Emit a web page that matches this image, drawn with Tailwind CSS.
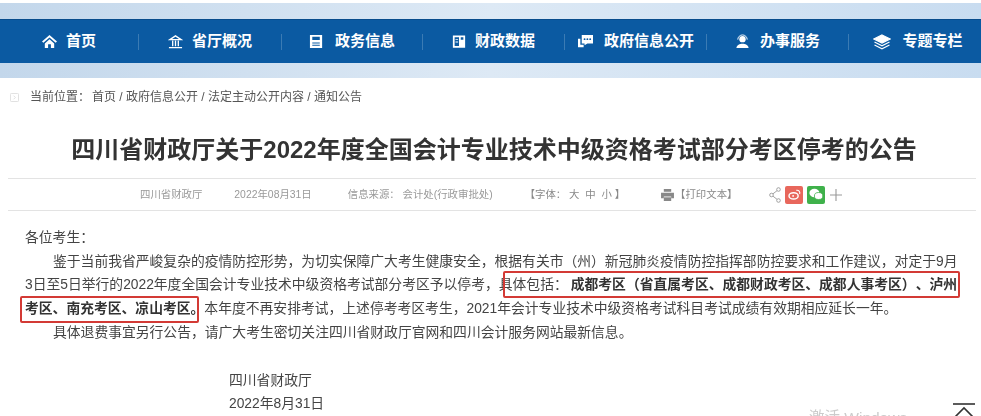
<!DOCTYPE html>
<html lang="zh-CN">
<head>
    <meta charset="UTF-8">
    <title>四川省财政厅关于2022年度全国会计专业技术中级资格考试部分考区停考的公告</title>
    <script src="https://cdn.jsdelivr.net/npm/@tailwindcss/browser@4"></script>
</head>
<body class="bg-white h-[416px] w-[981px] overflow-hidden relative font-['Liberation_Sans','Noto_Sans_CJK_SC',sans-serif] text-[#444] blur-[0.35px] [text-spacing-trim:space-all]">
    <!-- 顶部导航 -->
    <div class="mt-[3px] h-[75px] py-[16px] bg-gradient-to-r from-[#c3d7eb] via-[#dde9f5] to-[#c8dcf0]">
        <nav class="h-[44px] bg-[#0b5aa2] border-t border-[#084c8c] flex items-center text-white text-[15px] font-bold">
            <a class="w-[138px] flex items-center justify-center gap-[9px]">
                <svg class="w-[15px] h-[15px]" viewBox="0 0 16 16" fill="#fff"><path d="M8 1 L16 8 L14.5 9.2 L8 3.6 L1.5 9.2 L0 8 Z"/><path d="M8 5.5 L13 10 V15 H9.5 V11 H6.5 V15 H3 V10 Z"/></svg>
                <span>首页</span>
            </a>
            <span class="w-px h-[16px] bg-white/20"></span>
            <a class="w-[142px] flex items-center justify-center gap-[9px]">
                <svg class="w-[15px] h-[15px]" viewBox="0 0 16 16" fill="none" stroke="#fff" stroke-width="1.4"><path d="M2 6 L8 2 L14 6 Z"/><path d="M5 7 V13 M8 7 V13 M11 7 V13 M1 14.5 H15"/></svg>
                <span>省厅概况</span>
            </a>
            <span class="w-px h-[16px] bg-white/20"></span>
            <a class="w-[140px] flex items-center justify-center gap-[11px]">
                <svg class="w-[15px] h-[15px]" viewBox="0 0 16 16" fill="#fff"><path fill-rule="evenodd" d="M1 1 H14 V15 H1 Z M3.5 3 V6.5 H11.5 V3 Z M3.5 9 V10 H11.5 V9 Z M3.5 11.5 V12.5 H11.5 V11.5 Z"/></svg>
                <span>政务信息</span>
            </a>
            <span class="w-px h-[16px] bg-white/20"></span>
            <a class="w-[141px] flex items-center justify-center gap-[9px]">
                <svg class="w-[14px] h-[15px]" viewBox="0 0 16 16" fill="#fff"><path fill-rule="evenodd" d="M1 1 H15 V15 H1 Z M3 3 V13 H8 V3 Z M10 3 V6 H13 V3 Z"/><path d="M4 5 H7 V6 H4 Z M4 8 H7 V9 H4 Z"/></svg>
                <span>财政数据</span>
            </a>
            <span class="w-px h-[16px] bg-white/20"></span>
            <a class="w-[141px] flex items-center justify-center gap-[10px]">
                <svg class="w-[17px] h-[15px]" viewBox="0 0 18 16" fill="#fff"><path d="M5 1 H17 V10 H11 L8 12 V10 H5 Z"/><path d="M1 5 H3.5 V11.5 H7 V14 H1 Z"/><circle cx="8" cy="5.5" r="1" fill="#0b5aa2"/><circle cx="11" cy="5.5" r="1" fill="#0b5aa2"/><circle cx="14" cy="5.5" r="1" fill="#0b5aa2"/></svg>
                <span>政府信息公开</span>
            </a>
            <span class="w-px h-[16px] bg-white/20"></span>
            <a class="w-[141px] flex items-center justify-center gap-[10px]">
                <svg class="w-[15px] h-[15px]" viewBox="0 0 16 16" fill="#fff"><circle cx="8" cy="5.5" r="3.4"/><path d="M3 6 A5 5 0 0 1 13 6" fill="none" stroke="#fff" stroke-width="1"/><path d="M1.5 15 C2 11.5 5 10.5 8 10.5 C11 10.5 14 11.5 14.5 15 Z"/></svg>
                <span>办事服务</span>
            </a>
            <span class="w-px h-[16px] bg-white/20"></span>
            <a class="flex-1 flex items-center justify-center gap-[11px] pl-[6px]">
                <svg class="w-[18px] h-[16px]" viewBox="0 0 18 16" fill="none" stroke="#fff" stroke-width="1.2"><path d="M9 1 L17 5 L9 9 L1 5 Z" fill="#fff"/><path d="M1.5 8 L9 11.8 L16.5 8"/><path d="M1.5 11 L9 14.8 L16.5 11"/></svg>
                <span>专题专栏</span>
            </a>
        </nav>
    </div>

    <!-- 当前位置 -->
    <div class="mt-[11px] h-[16px] pl-[10px] flex items-center text-[12px] text-[#555]">
        <svg class="w-[9px] h-[9px] mr-[11px]" viewBox="0 0 10 10" fill="none" stroke="#ddd" stroke-width="1"><rect x="0.5" y="0.5" width="9" height="9" rx="1"/><path d="M4 3 L6 5 L4 7"/></svg>
        <span class="mr-[2px]">当前位置：</span>
        <span>首页 / 政府信息公开 / 法定主动公开内容 / 通知公告</span>
    </div>

    <!-- 标题 -->
    <h1 class="mt-[27px] pl-[7px] text-center text-[24px] leading-[36px] font-bold text-[#333] whitespace-nowrap">四川省财政厅关于2022年度全国会计专业技术中级资格考试部分考区停考的公告</h1>

    <!-- 信息条 -->
    <div class="mt-[10px] ml-[8px] mr-[5px] h-[33px] border-y border-[#e3e3e3] flex items-center text-[10.4px] text-[#999] relative whitespace-nowrap">
        <span class="ml-[132px]">四川省财政厅</span>
        <span class="ml-[32px]">2022年08月31日</span>
        <span class="ml-[36px]">信息来源： 会计处(行政审批处)</span>
        <span class="ml-[32px] text-[#888]">【字体： 大&nbsp; 中&nbsp; 小 】</span>
        <svg class="ml-[36px] w-[13px] h-[12px]" viewBox="0 0 14 13" fill="#888"><path d="M3 0 H11 V3 H3 Z"/><path d="M0 4 H14 V10 H11 V8 H3 V10 H0 Z"/><path d="M3 9 H11 V13 H3 Z"/></svg>
        <span class="ml-[1px] text-[#888]">【打印文本】</span>
        <svg class="ml-[32px] w-[12px] h-[16px]" viewBox="0 0 12 16" fill="none" stroke="#999" stroke-width="0.9"><circle cx="9.5" cy="2.5" r="1.8"/><circle cx="2.5" cy="8" r="1.8"/><circle cx="9.5" cy="13.5" r="1.8"/><path d="M8 3.7 L4 6.8 M4 9.2 L8 12.3"/></svg>
        <span class="ml-[4px] w-[18px] h-[18px] rounded-[2px] bg-[#e8675c] flex items-center justify-center">
            <svg class="w-[13px] h-[11px]" viewBox="0 0 14 12" fill="none" stroke="#fff" stroke-width="1.6"><ellipse cx="6" cy="7.5" rx="5" ry="3.4"/><circle cx="5.5" cy="7.5" r="1" fill="#fff" stroke="none"/><path d="M9 1.5 C11.5 1 13.5 3 12.6 5.5" stroke-width="1.2"/></svg>
        </span>
        <span class="ml-[4px] w-[18px] h-[18px] rounded-[2px] bg-[#3fb14b] flex items-center justify-center">
            <svg class="w-[14px] h-[13px]" viewBox="0 0 14 13" fill="#fff"><ellipse cx="5.4" cy="5" rx="5" ry="4.2"/><ellipse cx="9.6" cy="8" rx="4.2" ry="3.5" stroke="#3fb14b" stroke-width="0.8"/></svg>
        </span>
        <svg class="ml-[5px] w-[12px] h-[12px]" viewBox="0 0 12 12" stroke="#999" stroke-width="1.1"><path d="M0 6 H12 M6 0 V12"/></svg>
    </div>

    <!-- 正文 -->
    <div class="mt-[15px] ml-[25px] w-[936px] text-[13.8px] leading-[23.7px] text-[#444] relative whitespace-nowrap">
        <p>各位考生：</p>
        <p class="indent-[28px]">鉴于当前我省严峻复杂的疫情防控形势，为切实保障广大考生健康安全，根据有关市（州）新冠肺炎疫情防控指挥部防控要求和工作建议，对定于9月</p>
        <p>3日至5日举行的2022年度全国会计专业技术中级资格考试部分考区予以停考，具体包括：<b class="ml-[3px] text-[#333]">成都考区（省直属考区、成都财政考区、成都人事考区）、泸州</b><br><b class="text-[#333]">考区、南充考区、凉山考区。</b>本年度不再安排考试，上述停考考区考生，2021年会计专业技术中级资格考试科目考试成绩有效期相应延长一年。</p>
        <p class="indent-[28px]">具体退费事宜另行公告，请广大考生密切关注四川省财政厅官网和四川会计服务网站最新信息。</p>
        <p class="mt-[24px] pl-[204px]">四川省财政厅</p>
        <p class="pl-[204px]">2022年8月31日</p>
        <!-- 红框标注 -->
        <span class="absolute left-[478px] top-[45px] w-[457px] h-[27px] border-2 border-[#d33a35] rounded-[2px]"></span>
        <span class="absolute left-[-5px] top-[70px] w-[179px] h-[27px] border-2 border-[#d33a35] rounded-[2px]"></span>
    </div>

    <!-- 水印和回顶 -->
    <span class="absolute left-[809px] top-[408px] text-[15.5px] leading-[20px] text-[#ccc]">激活 Windows</span>
    <svg class="absolute left-[953px] top-[403px] w-[22px] h-[13px]" viewBox="0 0 22 13" fill="none" stroke="#333" stroke-width="1.6"><path d="M0 1 H22"/><path d="M2 14 L11 5 L20 14"/></svg>
</body>
</html>
